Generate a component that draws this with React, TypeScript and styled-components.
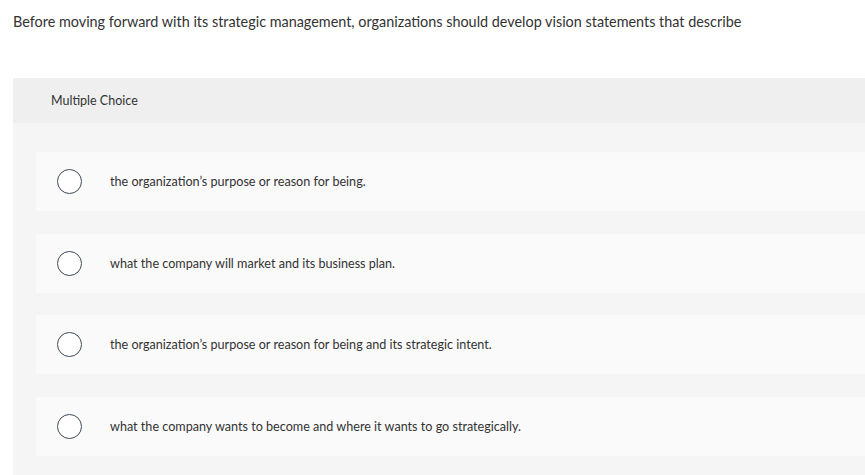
import React from "react";
import styled, { createGlobalStyle } from "styled-components";

const Global = createGlobalStyle`
  html, body { margin: 0; padding: 0; background: #ffffff; }
  body { font-family: Lato, "Open Sans", "Liberation Sans", sans-serif; color: #333333; }
`;

const Page = styled.div`
  padding: 12px 0 0 13px;
`;

const Question = styled.p`
  margin: 0;
  font-size: 14.4px;
  line-height: 20px;
  color: #333333;
`;

const Panel = styled.section`
  margin-top: 46px;
  background: #f5f5f5;
  min-height: 397px;
`;

const PanelHeader = styled.div`
  height: 45px;
  background: #efefef;
  display: flex;
  align-items: center;
  padding-left: 38px;
  font-size: 12.5px;
  color: #333333;
`;

const Options = styled.div`
  display: flex;
  flex-direction: column;
  gap: 22.7px;
  padding: 29px 0 19px 23px;
`;

const Card = styled.label`
  height: 59px;
  background: #fafafa;
  display: flex;
  align-items: center;
  padding-left: 21px;
  gap: 28px;
  cursor: pointer;
`;

const Radio = styled.span`
  width: 23px;
  height: 23px;
  border-radius: 50%;
  border: 1.3px solid #3d4b59;
  background: #ffffff;
  flex-shrink: 0;
`;

const OptionText = styled.span`
  font-size: 12.6px;
  color: #333333;
`;

const options = [
  "the organization\u2019s purpose or reason for being.",
  "what the company will market and its business plan.",
  "the organization\u2019s purpose or reason for being and its strategic intent.",
  "what the company wants to become and where it wants to go strategically.",
];

export default function App() {
  return (
    <>
      <Global />
      <Page>
        <Question>
          Before moving forward with its strategic management, organizations should develop vision statements that describe
        </Question>
        <Panel>
          <PanelHeader>Multiple Choice</PanelHeader>
          <Options>
            {options.map((o) => (
              <Card key={o}>
                <Radio />
                <OptionText>{o}</OptionText>
              </Card>
            ))}
          </Options>
        </Panel>
      </Page>
    </>
  );
}
